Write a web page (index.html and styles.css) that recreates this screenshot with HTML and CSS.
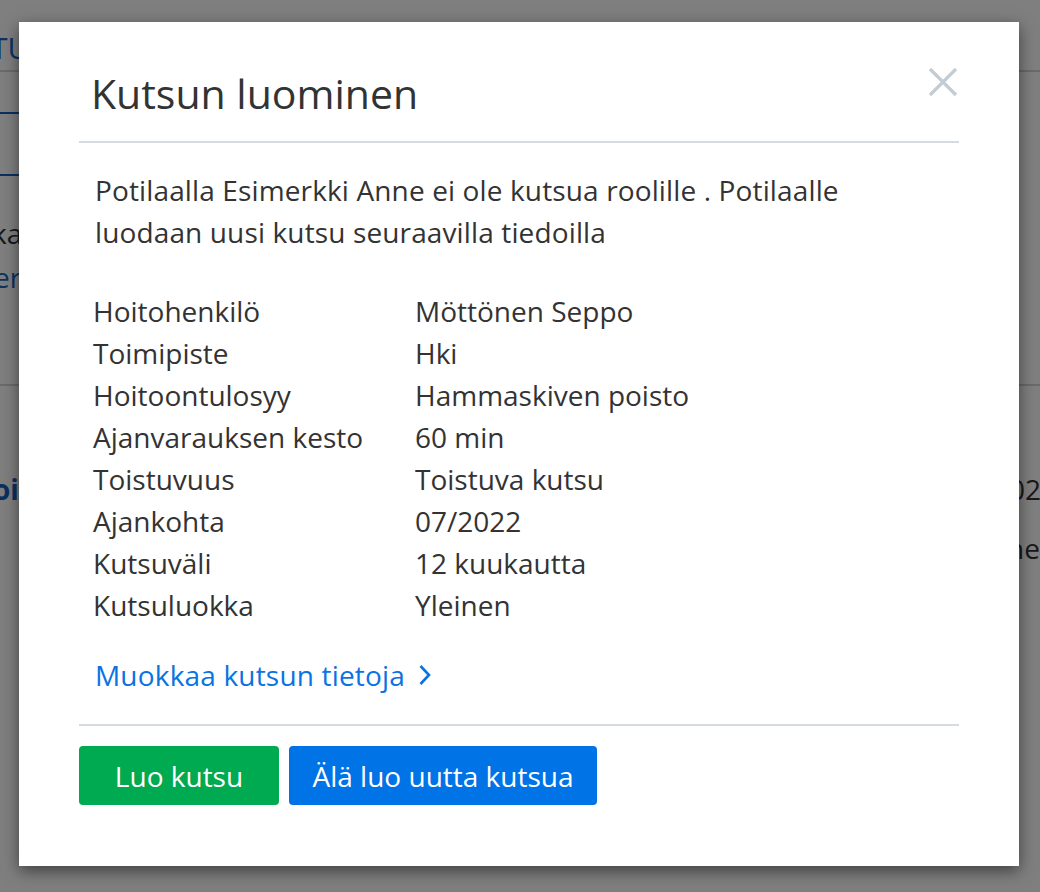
FILE: index.html
```html
<!DOCTYPE html>
<html lang="fi">
<head>
<meta charset="utf-8">
<title>Kutsun luominen</title>
<link rel="stylesheet" href="styles.css">
</head>
<body>
<div class="page">
  <div class="topnav"><span class="tab">TU</span></div>
  <div class="sidenav-item"></div>
  <p class="bg-line dark shift-k">ka</p>
  <p class="bg-line blue shift-e">er</p>
  <div class="bg-rule"></div>
  <div class="bg-row first">
    <span class="bg-bold">oi</span>
    <span class="bg-right date">2022</span>
  </div>
  <div class="bg-row">
    <span></span>
    <span class="bg-right">ne</span>
  </div>
</div>
<div class="backdrop"></div>
<div class="modal" role="dialog" aria-labelledby="modal-title">
  <div class="modal-header">
    <h2 class="modal-title" id="modal-title">Kutsun luominen</h2>
    <button class="close" aria-label="Sulje">
      <svg width="30" height="30" viewBox="0 0 30 30"><path d="M2 2 L28 28 M28 2 L2 28" stroke="#c3cbd3" stroke-width="3.2" fill="none" stroke-linecap="butt"/></svg>
    </button>
  </div>
  <div class="modal-body">
    <p class="intro">Potilaalla Esimerkki Anne ei ole kutsua roolille . Potilaalle luodaan uusi kutsu seuraavilla tiedoilla</p>
    <dl class="details">
      <dt>Hoitohenkilö</dt><dd>Möttönen Seppo</dd>
      <dt>Toimipiste</dt><dd>Hki</dd>
      <dt>Hoitoontulosyy</dt><dd>Hammaskiven poisto</dd>
      <dt>Ajanvarauksen kesto</dt><dd>60 min</dd>
      <dt>Toistuvuus</dt><dd>Toistuva kutsu</dd>
      <dt>Ajankohta</dt><dd>07/2022</dd>
      <dt>Kutsuväli</dt><dd>12 kuukautta</dd>
      <dt>Kutsuluokka</dt><dd>Yleinen</dd>
    </dl>
    <a class="edit-link" href="#">Muokkaa kutsun tietoja
      <svg class="chev" width="14" height="22" viewBox="0 0 14 22"><path d="M2.5 2 L11 11 L2.5 20" stroke="#0a73e2" stroke-width="2.6" fill="none"/></svg>
    </a>
  </div>
  <div class="modal-footer">
    <button class="btn btn-green">Luo kutsu</button>
    <button class="btn btn-blue">Älä luo uutta kutsua</button>
  </div>
</div>
</body>
</html>
```

FILE: styles.css
```css
html, body {
  margin: 0;
  padding: 0;
}
body {
  font-family: "Open Sans", "Noto Sans", sans-serif;
  font-size: 28px;
  color: #333;
  background: #fff;
  width: 1040px;
  height: 892px;
  overflow: hidden;
  position: relative;
}

/* background page */
.page {
  width: 1040px;
  height: 892px;
  overflow: hidden;
}
.topnav {
  height: 70px;
  border-bottom: 2px solid #d5d5d5;
  box-sizing: content-box;
}
.tab {
  display: block;
  margin-left: -9px;
  padding-top: 28px;
  font-size: 30px;
  line-height: 40px;
  color: #1566c4;
  white-space: nowrap;
}
.sidenav-item {
  width: 220px;
  height: 60px;
  margin-top: 40px;
  border-top: 2px solid #1560c0;
  border-bottom: 2px solid #1560c0;
}
.bg-line {
  margin: 0;
  line-height: 44px;
  white-space: nowrap;
}
.bg-line.dark { color: #333; }
.bg-line.blue { color: #1566c4; }
.shift-k {
  margin-top: 35px;
  margin-left: -8px;
}
.shift-e {
  margin-left: -6px;
}
.bg-rule {
  margin-top: 85px;
  border-top: 2px solid #d5d5d5;
}
.bg-row {
  display: flex;
  justify-content: space-between;
  line-height: 42px;
  margin-top: 17px;
  white-space: nowrap;
}
.bg-row.first {
  margin-top: 82px;
}
.bg-bold {
  font-weight: 700;
  color: #1560c0;
  margin-left: -7px;
}
.bg-right {
  color: #333;
}
.bg-right.date {
  margin-right: -17px;
}

.backdrop {
  position: absolute;
  inset: 0;
  background: rgba(0, 0, 0, 0.5);
}

/* modal */
.modal {
  position: absolute;
  top: 22px;
  left: 19px;
  width: 1000px;
  box-sizing: border-box;
  padding: 0 60px;
  background: #fff;
  box-shadow: 0 5px 15px rgba(0, 0, 0, 0.5);
}
.modal-header {
  display: flex;
  justify-content: space-between;
  align-items: flex-start;
  padding: 46px 0 23px;
  border-bottom: 2px solid #d6dbe1;
}
.modal-title {
  margin: 0 0 0 12px;
  font-size: 41px;
  font-weight: 400;
  line-height: 50px;
  color: #333;
}
.close {
  margin: -1px 1px 0 0;
  padding: 0;
  border: 0;
  background: none;
  width: 30px;
  height: 30px;
  display: flex;
}
.modal-body {
  padding: 26px 0 28px;
}
.intro {
  margin: 0;
  padding-left: 16px;
  max-width: 800px;
  line-height: 42px;
  letter-spacing: 0.13px;
}
.details {
  margin: 37px 0 0;
  padding-left: 14px;
  display: grid;
  grid-template-columns: 322px 1fr;
  line-height: 42px;
}
.details dt,
.details dd {
  margin: 0;
}
.edit-link {
  margin-top: 28px;
  padding-left: 16px;
  display: flex;
  align-items: center;
  gap: 13px;
  line-height: 42px;
  letter-spacing: 0.18px;
  color: #0a73e2;
  text-decoration: none;
}
.chev {
  display: block;
}
.modal-footer {
  display: flex;
  gap: 10px;
  padding: 20px 0 61px;
  border-top: 2px solid #d6dbe1;
}
.btn {
  height: 59px;
  padding: 0 23.5px;
  border: 0;
  border-radius: 4px;
  font-family: "Open Sans", "Noto Sans", sans-serif;
  font-size: 28px;
  color: #fff;
  cursor: pointer;
}
.btn-green {
  min-width: 200px;
  background: #00aa50;
}
.btn-blue {
  background: #0073e6;
}
```
